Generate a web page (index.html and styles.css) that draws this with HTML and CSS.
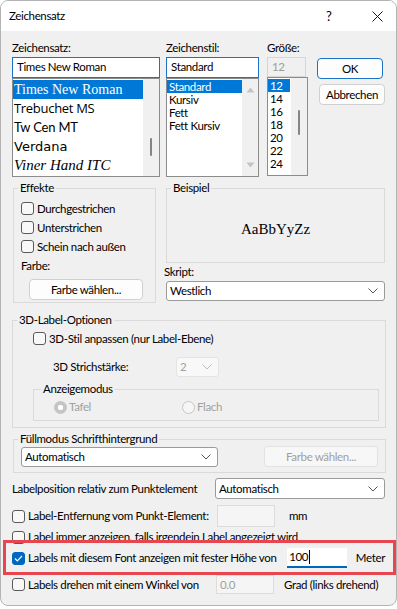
FILE: index.html
```html
<!DOCTYPE html>
<html lang="de">
<head>
<meta charset="UTF-8">
<title>Zeichensatz</title>
<link rel="stylesheet" href="styles.css">
</head>
<body>

<div class="dialog">
  <div class="titlebar">
    <span class="title">Zeichensatz</span>
    <span class="help">?</span>
    <span class="close">
      <svg width="11" height="11" viewBox="0 0 11 11"><path d="M0.5 0.5 L10.5 10.5 M10.5 0.5 L0.5 10.5" stroke="#1a1a1a" stroke-width="1" fill="none"/></svg>
    </span>
  </div>

  <div class="content">
    <div class="font-row">
      <div class="col col-font">
        <div class="cap">Zeichensatz:</div>
        <div class="edit focus">Times New Roman</div>
        <div class="list">
          <div class="items">
            <div class="fitem sel f-times">Times New Roman</div>
            <div class="fitem f-trebuchet">Trebuchet MS</div>
            <div class="fitem f-twcen">Tw Cen MT</div>
            <div class="fitem f-verdana">Verdana</div>
            <div class="fitem f-viner">Viner Hand ITC</div>
          </div>
          <div class="vscroll"><div class="thumb thumb-font"></div></div>
        </div>
      </div>

      <div class="col col-style">
        <div class="cap">Zeichenstil:</div>
        <div class="edit focus">Standard</div>
        <div class="list">
          <div class="items">
            <div class="item sel">Standard</div>
            <div class="item">Kursiv</div>
            <div class="item">Fett</div>
            <div class="item">Fett Kursiv</div>
          </div>
          <div class="vscroll arrows">
            <svg width="9" height="6" viewBox="0 0 9 6"><path d="M4.5 0.5 L8.5 5.5 L0.5 5.5 Z" fill="#c4c4c4"/></svg>
            <svg width="9" height="6" viewBox="0 0 9 6"><path d="M0.5 0.5 L8.5 0.5 L4.5 5.5 Z" fill="#c4c4c4"/></svg>
          </div>
        </div>
      </div>

      <div class="col col-size">
        <div class="cap">Größe:</div>
        <div class="edit disabled">12</div>
        <div class="list">
          <div class="items">
            <div class="item sel">12</div>
            <div class="item">14</div>
            <div class="item">16</div>
            <div class="item">18</div>
            <div class="item">20</div>
            <div class="item">22</div>
            <div class="item">24</div>
          </div>
          <div class="vscroll"><div class="thumb thumb-size"></div></div>
        </div>
      </div>

      <div class="col col-buttons">
        <div class="btn default">OK</div>
        <div class="btn cancel">Abbrechen</div>
      </div>
    </div>

    <div class="mid-row">
      <fieldset class="group effects">
        <legend>Effekte</legend>
        <div class="check-row"><span class="box"></span>Durchgestrichen</div>
        <div class="check-row"><span class="box"></span>Unterstrichen</div>
        <div class="check-row"><span class="box"></span>Schein nach außen</div>
        <div class="color-cap">Farbe:</div>
        <div class="btn color-btn">Farbe wählen...</div>
      </fieldset>

      <div class="sample-col">
        <fieldset class="group sample">
          <legend>Beispiel</legend>
          <div class="sample-text">AaBbYyZz</div>
        </fieldset>
        <div class="cap skript-cap">Skript:</div>
        <div class="select skript">
          <span>Westlich</span>
          <svg width="10" height="6" viewBox="0 0 10 6"><path d="M0.5 0.5 L5 5 L9.5 0.5" stroke="#555" fill="none"/></svg>
        </div>
      </div>
    </div>

    <fieldset class="group three-d">
      <legend>3D-Label-Optionen</legend>
      <div class="check-row"><span class="box"></span>3D-Stil anpassen (nur Label-Ebene)</div>
      <div class="stroke-row">
        <span class="stroke-cap">3D Strichstärke:</span>
        <div class="select small disabled">
          <span>2</span>
          <svg width="10" height="6" viewBox="0 0 10 6"><path d="M0.5 0.5 L5 5 L9.5 0.5" stroke="#c0c0c0" fill="none"/></svg>
        </div>
      </div>
      <fieldset class="group mode">
        <legend>Anzeigemodus</legend>
        <div class="radio-row">
          <span class="radio-item tafel"><span class="radio on"></span>Tafel</span>
          <span class="radio-item"><span class="radio"></span>Flach</span>
        </div>
      </fieldset>
    </fieldset>

    <fieldset class="group fill">
      <legend>Füllmodus Schrifthintergrund</legend>
      <div class="fill-row">
        <div class="select fill-select">
          <span>Automatisch</span>
          <svg width="10" height="6" viewBox="0 0 10 6"><path d="M0.5 0.5 L5 5 L9.5 0.5" stroke="#555" fill="none"/></svg>
        </div>
        <div class="btn off">Farbe wählen...</div>
      </div>
    </fieldset>

    <div class="pos-row">
      <span>Labelposition relativ zum Punktelement</span>
      <div class="select pos-select">
        <span>Automatisch</span>
        <svg width="10" height="6" viewBox="0 0 10 6"><path d="M0.5 0.5 L5 5 L9.5 0.5" stroke="#555" fill="none"/></svg>
      </div>
    </div>

    <div class="opt-row dist-row">
      <span class="check-label"><span class="box"></span>Label-Entfernung vom Punkt-Element:</span>
      <div class="field off dist-field"></div>
      <span class="unit">mm</span>
    </div>

    <div class="opt-row always-row">
      <span class="check-label"><span class="box"></span>Label immer anzeigen, falls irgendein Label angezeigt wird</span>
    </div>

    <div class="opt-row fixed-row">
      <span class="check-label"><span class="box checked">
        <svg width="9" height="7" viewBox="0 0 9 7"><path d="M1 3.5 L3.3 5.8 L8 1" stroke="#fff" stroke-width="1.2" fill="none"/></svg>
      </span>Labels mit diesem Font anzeigen mit fester Höhe von</span>
      <div class="field height-field">100<span class="caret"></span></div>
      <span class="unit meter">Meter</span>
    </div>

    <div class="opt-row angle-row">
      <span class="check-label"><span class="box"></span>Labels drehen mit einem Winkel von</span>
      <div class="field off angle-field">0.0</div>
      <span class="unit grad">Grad (links drehend)</span>
    </div>
  </div>

  <div class="mark"></div>
</div>

</body>
</html>
```

FILE: styles.css
```css
* {
  box-sizing: border-box;
}

html, body {
  margin: 0;
  background: #fff;
}

body {
  font-family: "Lato", "Liberation Sans", sans-serif;
  font-size: 11.5px;
  letter-spacing: -0.35px;
  line-height: 16px;
  color: #000;
}

.dialog {
  width: 397px;
  height: 606px;
  border: 1px solid #b4b4b4;
  border-radius: 8px;
  overflow: hidden;
  background: #f0f0f0;
  position: relative;
}

/* title bar */
.titlebar {
  height: 30px;
  background: #fff;
  display: flex;
  align-items: center;
  padding-left: 8px;
}

.title {
  flex: 1;
}

.help {
  font-size: 13px;
  width: 46px;
}

.close {
  width: 24px;
  display: flex;
}

.content {
  padding: 9px 11px 0 11px;
}

/* top: font lists */
.font-row {
  display: flex;
}

.col-style { margin-left: 6px; }
.col-size { margin-left: 8px; }
.col-buttons { margin-left: 9px; }

.col-font { width: 148px; }
.col-style { width: 93px; }
.col-size { width: 41px; }
.col-buttons { width: 68px; }

.cap {
  height: 16px;
  margin-bottom: 1px;
  white-space: nowrap;
}

.edit {
  height: 21px;
  background: #fff;
  border: 1px solid #8c8c8c;
  padding: 1px 4px;
  white-space: nowrap;
  overflow: hidden;
}

.edit.focus {
  border-color: #1a73c8;
}

.edit.disabled {
  width: 39px;
  height: 20px;
  background: #f0f0f0;
  border-color: #d5d5d5;
  color: #9c9c9c;
}

.list {
  height: 99px;
  background: #fff;
  border: 1px solid #8c8c8c;
  display: flex;
  overflow: hidden;
}

.items {
  flex: 1;
  padding-top: 1px;
  overflow: hidden;
}

.item {
  height: 13px;
  line-height: 13px;
  padding-left: 2px;
  white-space: nowrap;
}

.sel {
  background: #0078d7;
  color: #fff;
}

.fitem {
  height: 19px;
  line-height: 19px;
  padding-left: 1px;
  white-space: nowrap;
  letter-spacing: 0;
}

.f-times { font-family: "Liberation Serif", serif; font-size: 14px; }
.f-trebuchet { font-family: "Open Sans", sans-serif; font-size: 13px; letter-spacing: -0.3px; }
.f-twcen { font-family: "Lato", sans-serif; font-size: 13px; letter-spacing: -0.2px; }
.f-verdana { font-family: "DejaVu Sans", sans-serif; font-size: 13px; }
.f-viner { font-family: "Liberation Serif", serif; font-style: italic; font-size: 15px; }

.col-size .item {
  width: 22px;
}

.vscroll {
  width: 16px;
  background: #f0f0f0;
  display: flex;
  flex-direction: column;
  align-items: center;
}

.thumb {
  width: 2px;
  background: #858585;
  border-radius: 1px;
}

.thumb-font {
  margin-top: 59px;
  height: 18px;
}

.thumb-size {
  margin-top: 32px;
  height: 25px;
}

.arrows {
  justify-content: space-between;
  padding: 8px 0 8px;
}

/* buttons */
.btn {
  height: 21px;
  background: #fdfdfd;
  border: 1px solid #d0d0d0;
  border-radius: 4px;
  text-align: center;
  line-height: 19px;
  white-space: nowrap;
}

.btn.default {
  margin-top: 18px;
  width: 66px;
  border-color: #1a73c8;
}

.btn.cancel {
  margin-top: 5px;
  margin-left: 2px;
  width: 66px;
}

.btn.off {
  background: #f7f7f7;
  border-color: #e2e2e2;
  color: #a0a0a0;
}

/* groups */
.group {
  margin: 0;
  padding: 0 0 0 7px;
  border: 1px solid #dadada;
  min-width: 0;
}

.group legend {
  padding: 0 2px;
  margin-left: -3px;
  line-height: 16px;
}

.mid-row {
  display: flex;
  margin-top: 3px;
}

.effects {
  margin-left: 1px;
  width: 145px;
  height: 123px;
}

.check-row {
  height: 19px;
  display: flex;
  align-items: center;
  white-space: nowrap;
}

.effects .check-row:first-of-type {
  margin-top: 3px;
}

.box {
  width: 13px;
  height: 13px;
  border: 1px solid #5a5a5a;
  border-radius: 3px;
  background: #f8f8f8;
  margin-right: 3px;
  flex-shrink: 0;
  display: flex;
  align-items: center;
  justify-content: center;
}

.box.checked {
  background: #0067c0;
  border-color: #0067c0;
}

.color-cap {
  margin-top: 2px;
  height: 16px;
}

.color-btn {
  margin-top: 5px;
  margin-left: 8px;
  width: 114px;
}

.sample-col {
  margin-left: 8px;
  width: 221px;
}

.sample {
  margin-left: 2px;
  width: 219px;
  height: 83px;
}

.sample-text {
  height: 66px;
  display: flex;
  align-items: center;
  justify-content: center;
  font-family: "Liberation Serif", serif;
  font-size: 15px;
  letter-spacing: 0;
  padding-right: 7px;
}

.skript-cap {
  margin-top: 1px;
}

.select {
  height: 20px;
  background: #fff;
  border: 1px solid #9a9a9a;
  border-radius: 3px;
  display: flex;
  align-items: center;
  justify-content: space-between;
  padding: 0 6px 0 3px;
  white-space: nowrap;
}

.skript {
  margin-left: 2px;
  width: 219px;
}

.select.disabled {
  background: #f8f8f8;
  border-color: #e4e4e4;
  color: #a0a0a0;
}

/* 3D options */
.three-d {
  margin-top: 9px;
  width: 374px;
  height: 116px;
  padding-left: 20px;
}

.three-d > legend {
  margin-left: -16px;
}

.three-d > .check-row {
  margin-top: 1px;
}

.stroke-row {
  display: flex;
  align-items: center;
  margin-top: 9px;
  padding-left: 20px;
}

.stroke-cap {
  width: 123px;
}

.select.small {
  width: 43px;
}

.mode {
  margin-top: 4px;
  width: 346px;
  height: 40px;
}

.mode legend {
  margin-left: 0;
}

.radio-row {
  display: flex;
  align-items: center;
  height: 16px;
  margin-top: 2px;
  padding-left: 13px;
  color: #a0a0a0;
}

.radio-item {
  display: flex;
  align-items: center;
}

.tafel {
  width: 128px;
}

.radio {
  width: 13px;
  height: 13px;
  border-radius: 50%;
  border: 1px solid #c4c4c4;
  background: #f6f6f6;
  margin-right: 2px;
}

.radio.on {
  background: radial-gradient(circle, #fff 0 2.5px, #c4c4c4 3px);
}

/* fill mode */
.fill {
  margin-top: 3px;
  margin-left: 1px;
  width: 373px;
  height: 42px;
}

.fill-row {
  display: flex;
  align-items: flex-start;
  justify-content: space-between;
  padding-right: 7px;
}

.fill-select {
  width: 197px;
}

.fill-row .btn.off {
  width: 114px;
  margin-top: -1px;
}

/* bottom rows */
.pos-row {
  margin-top: 5px;
  height: 21px;
  display: flex;
  align-items: center;
  justify-content: space-between;
  white-space: nowrap;
}

.pos-select {
  width: 170px;
  height: 21px;
}

.opt-row {
  display: flex;
  align-items: center;
}

.check-label {
  display: flex;
  align-items: center;
  white-space: nowrap;
}

.dist-row {
  margin-top: 6px;
  height: 22px;
}

.dist-row .check-label {
  width: 205px;
}

.field {
  height: 22px;
  background: #fff;
  padding: 0 3px;
  display: flex;
  align-items: center;
}

.field.off {
  background: #f5f5f5;
  border: 1px solid #dcdcdc;
  color: #a0a0a0;
}

.dist-field {
  width: 58px;
}

.unit {
  margin-left: 14px;
  white-space: nowrap;
}

.always-row {
  margin-top: 2px;
  height: 16px;
}

.fixed-row {
  margin-top: 3px;
  height: 20px;
}

.fixed-row .check-label {
  width: 277px;
}

.height-field {
  width: 60px;
  height: 20px;
  border-bottom: 2px solid #0067c0;
  padding-left: 2px;
}

.caret {
  width: 1px;
  height: 14px;
  background: #000;
  margin-left: 1px;
}

.meter {
  margin-left: 9px;
}

.angle-row {
  margin-top: 7px;
  height: 19px;
}

.angle-row .check-label {
  width: 204px;
}

.angle-field {
  width: 58px;
  height: 19px;
}

.grad {
  margin-left: 10px;
}

/* red highlight frame drawn over the dialog */
.mark {
  position: absolute;
  left: 2px;
  top: 539px;
  width: 393px;
  height: 35px;
  border: 3px solid #e8464f;
}
```
